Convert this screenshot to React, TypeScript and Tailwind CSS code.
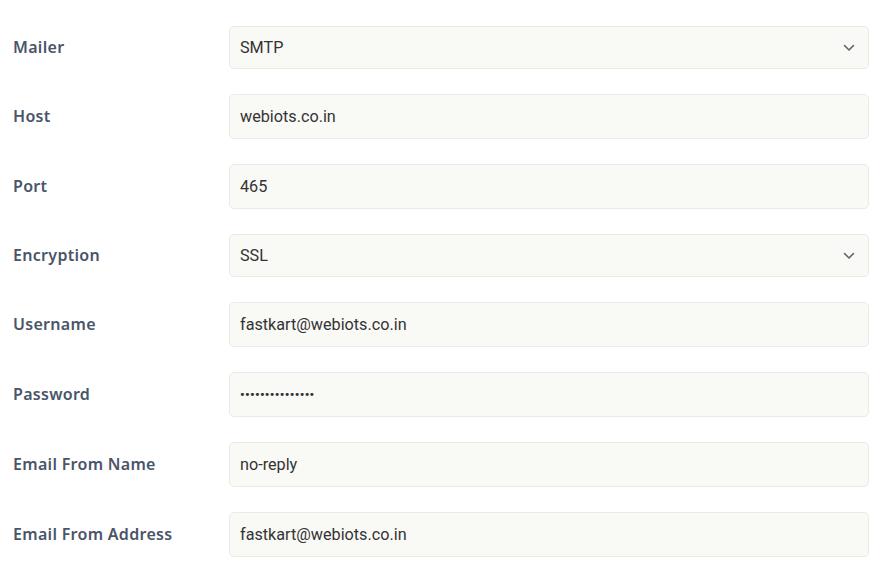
import React from "react";

const rows: { label: string; value: string; select?: boolean; password?: boolean }[] = [
  { label: "Mailer", value: "SMTP", select: true },
  { label: "Host", value: "webiots.co.in" },
  { label: "Port", value: "465" },
  { label: "Encryption", value: "SSL", select: true },
  { label: "Username", value: "fastkart@webiots.co.in" },
  { label: "Password", value: "•••••••••••••••", password: true },
  { label: "Email From Name", value: "no-reply" },
  { label: "Email From Address", value: "fastkart@webiots.co.in" },
];

export default function App() {
  return (
    <div className="w-[895px] h-[582px] bg-white pt-[26px] pl-[13px]">
      <div className="flex flex-col gap-[25px] w-[856px]">
        {rows.map((r) => (
          <div key={r.label} className="flex items-center">
            <div
              className="w-[216px] text-[16px] font-semibold tracking-[0.3px] text-[#4a5568] -mt-[1px]"
              style={{ fontFamily: "'Noto Sans', sans-serif" }}
            >
              {r.label}
            </div>
            <div
              className={`flex-1 flex items-center justify-between rounded-[5px] border border-[#ebebe6] bg-[#f9f9f6] pl-[10px] pr-[13px] ${
                r.select ? "h-[43px]" : "h-[45px]"
              }`}
            >
              <span
                className={`text-[#333333] pt-[1px] ${r.password ? "text-[13px] tracking-[0.3px] font-bold" : "text-[16.2px]"}`}
                style={{ fontFamily: "Roboto, sans-serif" }}
              >
                {r.value}
              </span>
              {r.select && (
                <svg width="12" height="8" viewBox="0 0 12 8" fill="none">
                  <path d="M1.5 1.5 L6 6 L10.5 1.5" stroke="#5a6577" strokeWidth="1.6" strokeLinecap="round" strokeLinejoin="round" />
                </svg>
              )}
            </div>
          </div>
        ))}
      </div>
    </div>
  );
}
